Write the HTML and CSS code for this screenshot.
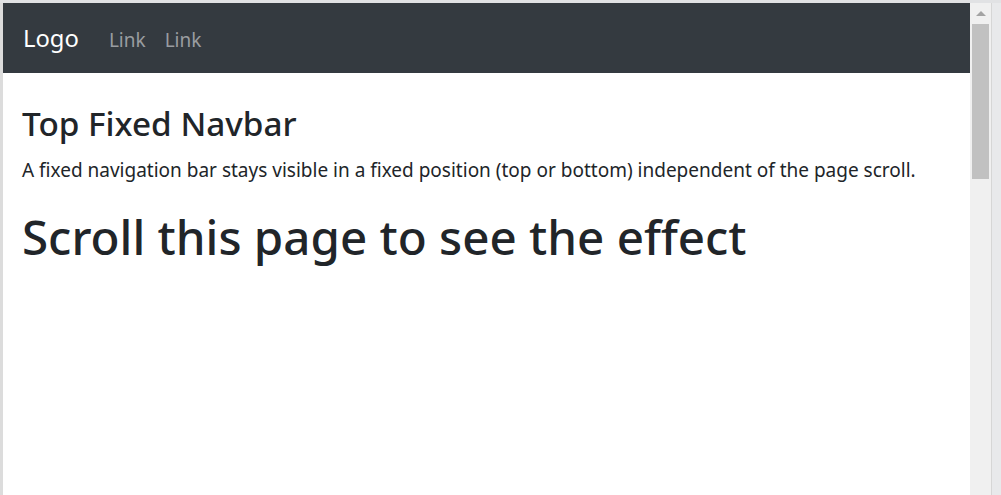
FILE: index.html
```html
<!DOCTYPE html>
<html>
<head>
<meta charset="utf-8">
<link rel="stylesheet" href="styles.css">
</head>
<body>
<div class="frame">
  <div class="viewport">
    <nav class="navbar">
      <a class="brand">Logo</a>
      <a class="nav-link">Link</a>
      <a class="nav-link">Link</a>
    </nav>
    <main class="content">
      <h3 class="title">Top Fixed Navbar</h3>
      <p class="lead">A fixed navigation bar stays visible in a fixed position (top or bottom) independent of the page scroll.</p>
      <h1 class="big">Scroll this page to see the effect</h1>
    </main>
  </div>
  <div class="scrollbar">
    <div class="arrow"></div>
    <div class="thumb"></div>
  </div>
  <div class="edge"></div>
</div>
</body>
</html>
```

FILE: styles.css
```css
html, body {
  margin: 0;
  padding: 0;
  height: 100%;
  overflow: hidden;
  background: #e8e9eb;
}
.frame {
  display: flex;
  height: 492px;
  border-top: 3px solid #e1e2e4;
  font-family: "Noto Sans", "Open Sans", sans-serif;
  color: #212529;
}
.viewport {
  flex: 0 0 967px;
  border-left: 3px solid #dcdcdc;
  background: #fff;
  display: flex;
  flex-direction: column;
}
.navbar {
  height: 70px;
  background: #343a40;
  display: flex;
  align-items: baseline;
  padding: 0 20px;
  box-sizing: border-box;
}
.brand {
  color: #fff;
  font-size: 23.8px;
  line-height: 1;
  padding-top: 24px;
  margin-right: 21px;
}
.nav-link {
  color: #9a9da0;
  font-size: 19px;
  line-height: 1;
  padding: 0 10px 0 9px;
}
.content {
  padding: 31px 19px 0;
}
.title {
  font-size: 33.3px;
  font-weight: 500;
  margin: 0 0 12px;
  line-height: 1.2;
}
.lead {
  font-size: 19px;
  margin: 0 0 24px;
  line-height: 1.5;
}
.big {
  font-size: 47.5px;
  font-weight: 500;
  margin: 0;
  line-height: 1.2;
}
.scrollbar {
  flex: 0 0 21px;
  background: #f0f0f0;
  display: flex;
  flex-direction: column;
  align-items: center;
}
.arrow {
  margin-top: 8px;
  width: 0;
  height: 0;
  border-left: 5px solid transparent;
  border-right: 5px solid transparent;
  border-bottom: 5px solid #a3a3a3;
}
.thumb {
  margin-top: 8px;
  width: 17px;
  height: 155px;
  background: #c1c1c1;
}
.edge {
  flex: 1;
  border-left: 1px solid #d6d6d6;
  background: #e8e9eb;
}
```
